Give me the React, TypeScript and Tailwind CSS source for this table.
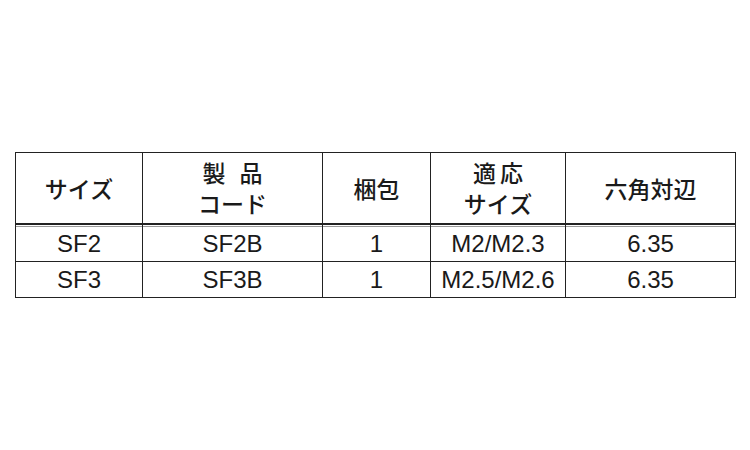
import React from "react";

const rows = [
  ["SF2", "SF2B", "1", "M2/M2.3", "6.35"],
  ["SF3", "SF3B", "1", "M2.5/M2.6", "6.35"],
];

export default function App() {
  const head =
    "flex flex-col items-center justify-center h-[72px] border-b-2 border-b-[#222] text-[23px] leading-[31px] text-[#1a1a1a] font-medium font-['Noto_Sans_CJK_JP','Noto_Sans',sans-serif]";
  const sep = " border-l border-l-[#222]";
  return (
    <div className="w-[750px] h-[450px] bg-white pt-[152px] pl-[15px]">
      <div className="w-[721px] border border-[#222] grid grid-cols-[126px_180px_108px_135px_170px]">
        <div className={head}>サイズ</div>
        <div className={head + sep}>
          <span>
            製<span className="inline-block w-[14px]"></span>品
          </span>
          <span>コード</span>
        </div>
        <div className={head + sep}>梱包</div>
        <div className={head + sep}>
          <span>
            適<span className="inline-block w-[4px]"></span>応
          </span>
          <span>サイズ</span>
        </div>
        <div className={head + sep}>六角対辺</div>
        {rows.map((r, ri) =>
          r.map((c, ci) => (
            <div
              key={ri + "-" + ci}
              className={
                "flex items-center justify-center h-[36px] text-[24px] text-[#1a1a1a] font-['Liberation_Sans',Arial,sans-serif]" +
                (ci > 0 ? sep : "") +
                (ri === 0
                  ? " pt-[2px] shadow-[inset_0_1px_0_#fff,inset_0_2px_0_#9a9a9a]"
                  : " border-t border-t-[#222]")
              }
            >
              {c}
            </div>
          ))
        )}
      </div>
    </div>
  );
}
